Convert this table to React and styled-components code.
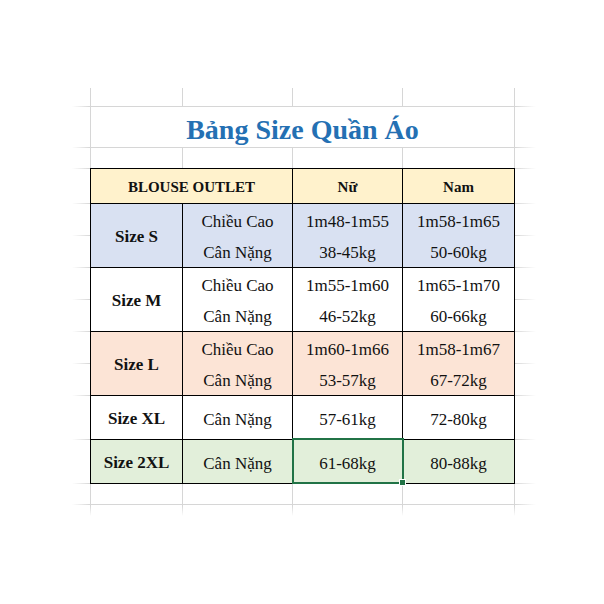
import React from "react";
import styled, { createGlobalStyle } from "styled-components";

const serif = `"Liberation Serif", "Nimbus Roman", "Nimbus Roman No9 L", FreeSerif, "Noto Serif", "DejaVu Serif", "Times New Roman", Times, serif`;

const GlobalStyle = createGlobalStyle`
    body {
        margin: 0;
        background: #fff;
        font-family: ${serif};
        color: #111;
    }
`;

const Page = styled.main`
    width: 604px;
    height: 604px;
    overflow: hidden;
    background: #fff;
    font-family: ${serif};
`;

const Sheet = styled.div`
    display: grid;
    margin: 88px 0 0 72px;
    width: 464px;
    grid-template-columns: 19px 92px 110px 110px 112px 21px;
    grid-template-rows: 19px 41px 21px 35px repeat(6, 32px) 44px 44px 21px 11px;
`;

const VLine = styled.div`
    grid-row: 1 / -1;
    grid-column: ${(p) => p.$col};
    justify-self: start;
    width: 1px;
    margin-left: -1px;
    background: linear-gradient(to bottom, #d6d6d6 0, #d6d6d6 calc(100% - 10px), rgba(214, 214, 214, 0) 100%);
`;

const HLine = styled.div`
    grid-row: ${(p) => p.$row};
    grid-column: 1 / -1;
    align-self: start;
    height: 1px;
    margin-top: -1px;
    background: linear-gradient(
        to right,
        rgba(214, 214, 214, 0) 0,
        #d6d6d6 18px,
        #d6d6d6 calc(100% - 21px),
        rgba(214, 214, 214, 0) 100%
    );
`;

const Title = styled.h1`
    grid-row: 2;
    grid-column: 2 / 6;
    margin: 0 1px 1px 0;
    background: #fff;
    display: flex;
    align-items: center;
    justify-content: center;
    padding-top: 6px;
    font-family: ${serif};
    font-size: 28px;
    font-weight: bold;
    color: #2470b3;
`;

const Cell = styled.div`
    grid-row: ${(p) => p.$row};
    grid-column: ${(p) => p.$col};
    margin: -1px 0 0 -1px;
    border: 1px solid #000;
    background: ${(p) => p.$bg || "#fff"};
    display: flex;
    flex-direction: column;
    align-items: center;
    justify-content: center;
    font-family: ${serif};
    font-size: ${(p) => (p.$head ? "15px" : "17px")};
    font-weight: ${(p) => (p.$bold ? "bold" : "normal")};
    color: #111;
    padding-top: 2px;
    box-sizing: border-box;
`;

const Line = styled.div`
    flex: 1;
    display: flex;
    align-items: center;
    justify-content: center;
    padding-top: 2px;
`;

const Selection = styled.div`
    grid-row: 12;
    grid-column: 4;
    position: relative;
    margin: -2px -1px 0 -1px;
    border: 2px solid #217346;

    &::after {
        content: "";
        position: absolute;
        right: -4px;
        bottom: -4px;
        width: 5px;
        height: 5px;
        background: #217346;
        border: 1px solid #fff;
    }
`;

const colors = {
    head: "#fff2cc",
    blue: "#d9e1f2",
    peach: "#fce4d6",
    green: "#e2efda",
};

const sizes = [
    { name: "Size S", row: "5 / 7", bg: colors.blue, labels: ["Chiều Cao", "Cân Nặng"], nu: ["1m48-1m55", "38-45kg"], nam: ["1m58-1m65", "50-60kg"] },
    { name: "Size M", row: "7 / 9", bg: "#fff", labels: ["Chiều Cao", "Cân Nặng"], nu: ["1m55-1m60", "46-52kg"], nam: ["1m65-1m70", "60-66kg"] },
    { name: "Size L", row: "9 / 11", bg: colors.peach, labels: ["Chiều Cao", "Cân Nặng"], nu: ["1m60-1m66", "53-57kg"], nam: ["1m58-1m67", "67-72kg"] },
    { name: "Size XL", row: "11", bg: "#fff", labels: ["Cân Nặng"], nu: ["57-61kg"], nam: ["72-80kg"] },
    { name: "Size 2XL", row: "12", bg: colors.green, labels: ["Cân Nặng"], nu: ["61-68kg"], nam: ["80-88kg"] },
];

const lineRows = [2, 3, 4, 5, 6, 7, 8, 9, 10, 11, 12, 13, 14];

function Lines({ items }) {
    return items.map((t, i) => <Line key={i}>{t}</Line>);
}

export default function App() {
    return (
        <>
            <GlobalStyle />
            <Page>
                <Sheet>
                    {[2, 3, 4, 5, 6].map((c) => (
                        <VLine key={"v" + c} $col={c} />
                    ))}
                    {lineRows.map((r) => (
                        <HLine key={"h" + r} $row={r} />
                    ))}

                    <Title>Bảng Size Quần Áo</Title>

                    <Cell $row="4" $col="2 / 4" $bg={colors.head} $bold $head>BLOUSE OUTLET</Cell>
                    <Cell $row="4" $col="4" $bg={colors.head} $bold $head>Nữ</Cell>
                    <Cell $row="4" $col="5" $bg={colors.head} $bold $head>Nam</Cell>

                    {sizes.map((s) => (
                        <React.Fragment key={s.name}>
                            <Cell $row={s.row} $col="2" $bg={s.bg} $bold>{s.name}</Cell>
                            <Cell $row={s.row} $col="3" $bg={s.bg}><Lines items={s.labels} /></Cell>
                            <Cell $row={s.row} $col="4" $bg={s.bg}><Lines items={s.nu} /></Cell>
                            <Cell $row={s.row} $col="5" $bg={s.bg}><Lines items={s.nam} /></Cell>
                        </React.Fragment>
                    ))}

                    <Selection />
                </Sheet>
            </Page>
        </>
    );
}
